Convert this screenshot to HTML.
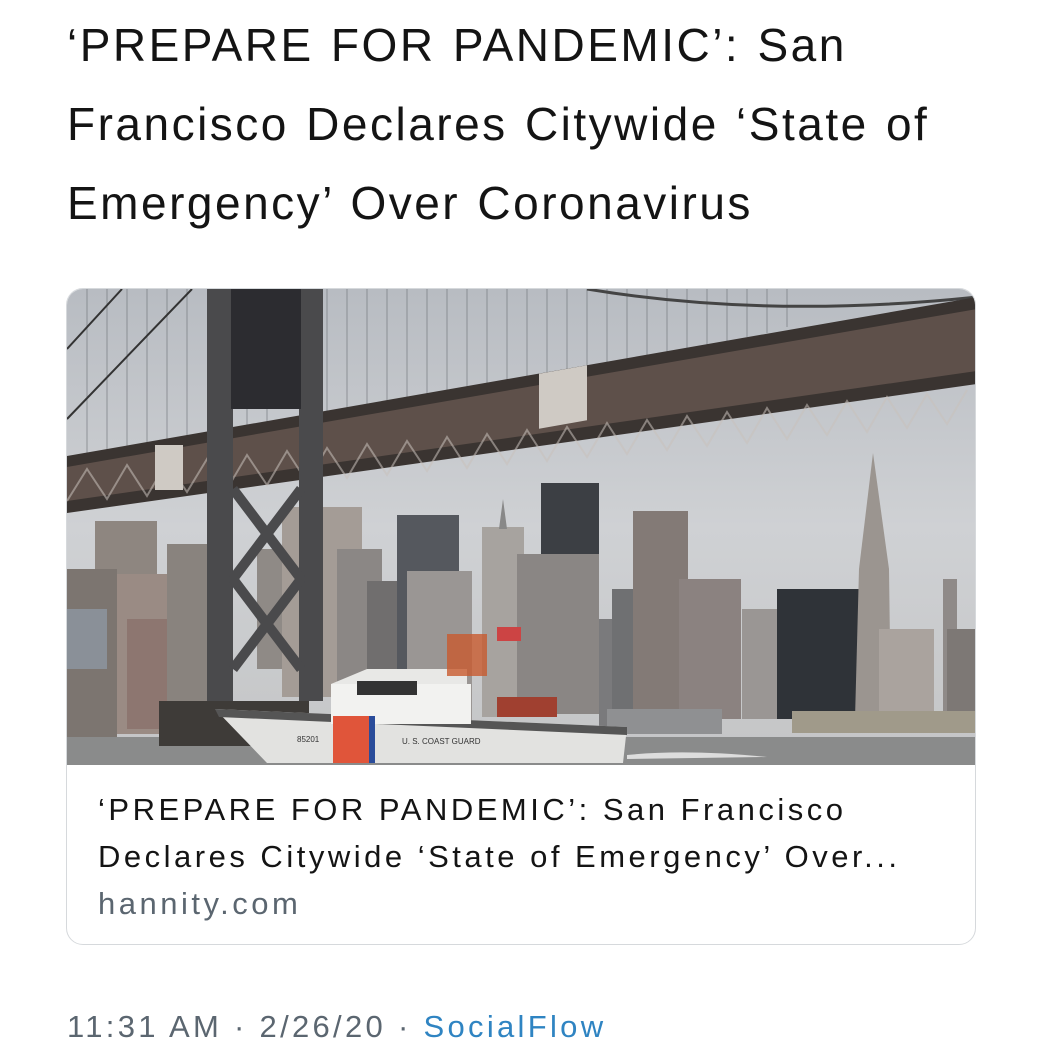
<!DOCTYPE html>
<html><head><style>
body{margin:0;width:1061px;height:1061px;background:#fff;font-family:"Liberation Sans",sans-serif;position:relative;overflow:hidden}
.t{position:absolute;left:67px;top:6px;font-size:46px;letter-spacing:2.5px;word-spacing:2px;line-height:79px;color:#141414;width:960px;white-space:nowrap}
.card{position:absolute;left:66px;top:288px;width:908px;height:655px;border:1px solid #d6d9dc;border-radius:17px;overflow:hidden}
.ct{position:absolute;left:31px;top:497px;font-size:31px;letter-spacing:3.5px;line-height:47px;color:#141414;white-space:nowrap}
.ct .d{color:#5b6670}
.f{position:absolute;left:67px;top:1009px;font-size:31px;letter-spacing:3.3px;color:#5b6670;white-space:nowrap}
.f span{color:#2f84c2}
</style></head><body>
<div class="t">‘PREPARE FOR PANDEMIC’: San<br>Francisco Declares Citywide ‘State of<br>Emergency’ Over Coronavirus</div>
<div class="card">
<svg width="910" height="476" viewBox="0 0 910 476" style="display:block">
<defs><linearGradient id="s" x1="0" y1="0" x2="0" y2="1"><stop offset="0" stop-color="#b8bcc2"/><stop offset="0.5" stop-color="#cfd1d4"/><stop offset="1" stop-color="#c4c5c6"/></linearGradient></defs>
<rect width="910" height="476" fill="url(#s)"/>
<g stroke="#6a6e74" stroke-width="1" opacity=".6">
<path d="M20 0V170M40 0V168M60 0V165M80 0V162M100 0V160M120 0V158M180 0V150M200 0V148M260 0V140M280 0V135M300 0V130M320 0V126M340 0V120M360 0V117M380 0V112M400 0V108M420 0V104M440 0V100M460 0V96M480 0V92M500 0V88M520 0V84M540 0V80M560 0V76M580 0V72M600 0V68M620 0V64M640 0V58M660 0V54M680 0V48M700 0V44M720 0V38"/>
</g>
<path d="M0 60 L55 0 M0 130 L125 0" stroke="#333" stroke-width="2" fill="none"/>
<path d="M520 0 Q700 30 910 8" stroke="#444" stroke-width="3" fill="none"/>
<g>
<rect x="28" y="232" width="62" height="210" fill="#8e8680"/>
<rect x="0" y="280" width="50" height="170" fill="#7c7570"/>
<rect x="0" y="320" width="40" height="60" fill="#8a9098"/>
<rect x="50" y="285" width="50" height="160" fill="#9a8b84"/>
<rect x="60" y="330" width="55" height="110" fill="#8d7670"/>
<rect x="100" y="255" width="45" height="190" fill="#89837e"/>
<rect x="190" y="260" width="35" height="120" fill="#8f8a86"/>
<rect x="215" y="218" width="80" height="190" fill="#a49c96"/>
<rect x="270" y="260" width="45" height="150" fill="#8b8785"/>
<rect x="300" y="292" width="30" height="130" fill="#706e6e"/>
<rect x="330" y="226" width="62" height="200" fill="#55585e"/>
<rect x="340" y="282" width="65" height="150" fill="#9a9694"/>
<rect x="415" y="238" width="42" height="190" fill="#a7a39f"/>
<polygon points="436,210 432,240 440,240" fill="#888"/>
<rect x="474" y="194" width="58" height="230" fill="#3c3f44"/>
<rect x="450" y="265" width="82" height="160" fill="#8a8684"/>
<rect x="532" y="330" width="40" height="110" fill="#7a7a7c"/>
<rect x="545" y="300" width="30" height="130" fill="#6f7072"/>
<rect x="566" y="222" width="55" height="200" fill="#837a76"/>
<rect x="612" y="290" width="62" height="140" fill="#8b8280"/>
<rect x="675" y="320" width="40" height="110" fill="#9a9694"/>
<rect x="710" y="300" width="85" height="130" fill="#2f3338"/>
<polygon points="806,164 792,280 788,430 824,430 822,280" fill="#9b9590"/>
<rect x="812" y="340" width="55" height="95" fill="#aaa39e"/>
<rect x="876" y="290" width="14" height="150" fill="#8f8a88"/>
<rect x="880" y="340" width="30" height="100" fill="#7d7875"/>
<rect x="540" y="420" width="115" height="25" fill="#8f9092"/>
<rect x="725" y="422" width="185" height="22" fill="#a09a8a"/>
</g>
<rect y="448" width="910" height="28" fill="#8a8b8b"/>
<polygon points="0,167 910,8 910,95 0,224" fill="#3a3431"/>
<polygon points="0,178 910,20 910,82 0,212" fill="#5e504a"/>
<path d="M0 212 L20 180 L40 210 L60 176 L80 207 L100 173 L120 203 L140 170 L160 200 L180 166 L200 196 L220 162 L240 193 L260 159 L280 189 L300 155 L320 186 L340 152 L360 182 L380 148 L400 179 L420 145 L440 175 L460 141 L480 172 L500 138 L520 168 L540 134 L560 165 L580 131 L600 161 L620 127 L640 157 L660 123 L680 154 L700 119 L720 150 L740 116 L760 146 L780 112 L800 143 L820 108 L840 139 L860 105 L880 135 L900 101" stroke="#c9c1bb" stroke-width="2" fill="none" opacity=".55"/>
<rect x="472" y="80" width="48" height="55" fill="#cfcac4" transform="skewY(-10) translate(0,88)"/>
<rect x="88" y="156" width="28" height="45" fill="#cfcac4"/>
<rect x="140" y="0" width="26" height="412" fill="#4a4a4c"/>
<rect x="232" y="0" width="24" height="412" fill="#4a4a4c"/>
<rect x="164" y="0" width="70" height="120" fill="#2c2c30"/>
<path d="M166 200 L234 290 M234 200 L166 290 M166 290 L234 380 M234 290 L166 380" stroke="#4a4a4c" stroke-width="10"/>
<rect x="92" y="412" width="150" height="45" fill="#3e3b38"/>
<polygon points="148,420 560,438 556,474 200,474" fill="#e2e2e0"/>
<polygon points="148,420 560,438 560,446 152,428" fill="#555"/>
<rect x="264" y="395" width="140" height="40" fill="#f2f2f0"/>
<polygon points="264,395 300,380 400,380 400,395" fill="#e8e8e6"/>
<rect x="290" y="392" width="60" height="14" fill="#333"/>
<rect x="266" y="427" width="36" height="47" fill="#e0553a"/>
<rect x="302" y="427" width="6" height="47" fill="#2a4c9a"/>
<rect x="380" y="345" width="40" height="42" fill="#c85a2e" opacity=".8"/>
<rect x="430" y="338" width="24" height="14" fill="#c44"/>
<rect x="430" y="408" width="60" height="20" fill="#a04030"/>
<text x="230" y="453" font-size="8" fill="#333" font-family="Liberation Sans">85201</text>
<text x="335" y="455" font-size="8" fill="#333" font-family="Liberation Sans">U. S. COAST GUARD</text>
<path d="M560 466 Q620 460 700 468 L560 470Z" fill="#ddd"/>
</svg>
<div class="ct">‘PREPARE FOR PANDEMIC’: San Francisco<br>Declares Citywide ‘State of Emergency’ Over...<br><span class="d">hannity.com</span></div>
</div>
<div class="f">11:31 AM · 2/26/20 · <span>SocialFlow</span></div>
</body></html>
